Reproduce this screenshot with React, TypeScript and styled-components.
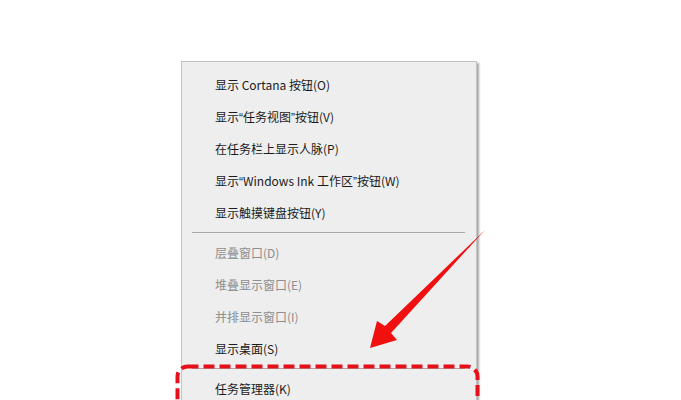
import styled, { createGlobalStyle } from "styled-components";

const GlobalStyle = createGlobalStyle`
  html, body {
    margin: 0;
    padding: 0;
    background: #fff;
    overflow: hidden;
  }
  body {
    font-family: "Noto Sans CJK SC", "Noto Sans", sans-serif;
  }
`;

type Entry = { label: string; disabled?: boolean } | "sep";

const entries: Entry[] = [
  { label: "显示 Cortana 按钮(O)" },
  { label: "显示“任务视图”按钮(V)" },
  { label: "在任务栏上显示人脉(P)" },
  { label: "显示“Windows Ink 工作区”按钮(W)" },
  { label: "显示触摸键盘按钮(Y)" },
  "sep",
  { label: "层叠窗口(D)", disabled: true },
  { label: "堆叠显示窗口(E)", disabled: true },
  { label: "并排显示窗口(I)", disabled: true },
  { label: "显示桌面(S)" },
  "sep",
  { label: "任务管理器(K)" },
];

// curly quotes come from a Latin font so they stay narrow, as on Windows
const renderLabel = (label: string) =>
  label.split(/([“”])/).map((part, i) =>
    part === "“" || part === "”" ? <Quote key={i}>{part}</Quote> : part
  );

export default function App() {
  return (
    <>
      <GlobalStyle />
      <Page>
        <Menu>
          {entries.map((e, i) =>
            e === "sep" ? (
              <Separator key={i} />
            ) : (
              <Item key={i} $disabled={e.disabled}>
                {renderLabel(e.label)}
              </Item>
            )
          )}
        </Menu>
        <Annotations width="681" height="400" viewBox="0 0 681 400">
          <rect
            x="177.5"
            y="366.5"
            width="300"
            height="80"
            rx="10"
            fill="none"
            stroke="#e5101a"
            strokeWidth="4"
            strokeDasharray="11 5"
          />
          <polygon
            points="370,348 377,321 385,326 485,230 391,333 397,340"
            fill="#f01010"
          />
        </Annotations>
      </Page>
    </>
  );
}

const Page = styled.div`
  position: relative;
  width: 681px;
  height: 400px;
  padding: 61px 0 0 181px;
  box-sizing: border-box;
  overflow: hidden;
`;

const Menu = styled.div`
  width: 294px;
  min-height: 400px;
  background: #eeeeee;
  border: 1px solid #c4c4c4;
  box-shadow: 2px 2px 2px rgba(0, 0, 0, 0.35);
  padding: 7px 0;
`;

const Item = styled.div<{ $disabled?: boolean }>`
  height: 20px;
  line-height: 20px;
  padding: 6px 0 6px 33px;
  font-size: 12px;
  color: ${(p) => (p.$disabled ? "#8d8d8d" : "#1b1b1b")};
  white-space: nowrap;
`;

const Quote = styled.span`
  font-family: "Liberation Sans", sans-serif;
`;

const Separator = styled.div`
  height: 1px;
  margin: 3px 11px 4px 10px;
  background: #a8a8a8;
`;

const Annotations = styled.svg`
  position: absolute;
  left: 0;
  top: 0;
  pointer-events: none;
`;
